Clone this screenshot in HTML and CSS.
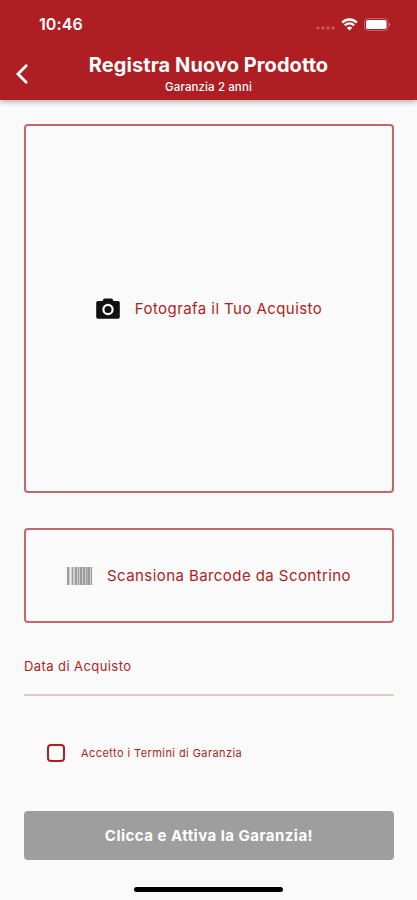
FILE: index.html
```html
<!DOCTYPE html>
<html lang="it">
<head>
    <meta charset="UTF-8">
    <meta name="viewport" content="width=device-width, initial-scale=1.0">
    <title>Registra Nuovo Prodotto</title>
    <link rel="stylesheet" href="styles.css">
</head>
<body>
    <header class="header">
        <div class="status-bar">
            <span class="time">10:46</span>
            <div class="status-icons">
                <svg class="signal" width="20" height="4" viewBox="0 0 20 4">
                    <circle cx="2" cy="2" r="1.7"/>
                    <circle cx="7" cy="2" r="1.7"/>
                    <circle cx="12" cy="2" r="1.7"/>
                    <circle cx="17" cy="2" r="1.7"/>
                </svg>
                <svg class="wifi" width="17" height="13" viewBox="0 0 17 13">
                    <path d="M1.2 4.6a10.3 10.3 0 0 1 14.6 0" stroke-width="2.5"/>
                    <path d="M3.8 7.4a6.6 6.6 0 0 1 9.4 0" stroke-width="2.2"/>
                    <path d="M8.5 12.6L5.8 9.7a3.9 3.9 0 0 1 5.4 0z" fill="#fff" stroke="none"/>
                </svg>
                <svg class="battery" width="27" height="13" viewBox="0 0 27 13">
                    <rect x=".5" y=".5" width="23.5" height="12" rx="3.3" fill="none" stroke="#fff" stroke-opacity=".3"/>
                    <rect x="2" y="2" width="20.5" height="9" rx="1.8" fill="#fff"/>
                    <path d="M25 4.4v4.2c1.6-.6 1.6-3.6 0-4.2z" fill="#fff" fill-opacity=".4"/>
                </svg>
            </div>
        </div>
        <div class="nav-bar">
            <button class="back" aria-label="Indietro">
                <svg width="14" height="22" viewBox="0 0 14 22">
                    <path d="M11.2 2.8L3 11l8.2 8.2"/>
                </svg>
            </button>
            <div class="titles">
                <h1>Registra Nuovo Prodotto</h1>
                <p>Garanzia 2 anni</p>
            </div>
        </div>
    </header>

    <main class="content">
        <button class="box box-photo">
            <svg class="camera" width="24" height="22" viewBox="0 0 24 22">
                <path d="M7.2 1.6Q7.8.5 9 .5h6q1.2 0 1.8 1.1l.8 1.400H22q1.800 0 1.800 1.800v14.200q0 1.800-1.800 1.800H2Q.2 20.800.2 19V4.800Q.2 3 2 3h4.400z" fill="#111"/>
                <circle cx="12" cy="11.5" r="4.600" fill="none" stroke="#fafafa" stroke-width="2.200"/>
            </svg>
            <span>Fotografa il Tuo Acquisto</span>
        </button>

        <button class="box box-barcode">
            <svg class="barcode" width="25" height="18" viewBox="0 0 25 18">
                <rect width="25" height="18" fill="#d0d0d0"/>
                <path d="M3 0h1v18H3z" fill="#f2f2f2"/>
                <path d="M0 0h2v18H0zM5 0h1v18H5zM8 0h2v18H8zM11 0h1v18h-1zM13 0h2v18h-2zM16 0h2v18h-2zM19 0h1.500v18H19zM21 0h2v18h-2zM24 0h1v18h-1z" fill="#9c9c9c"/>
            </svg>
            <span>Scansiona Barcode da Scontrino</span>
        </button>

        <div class="date-field"><span>Data di Acquisto</span></div>

        <label class="terms">
            <input type="checkbox">
            <span>Accetto i Termini di Garanzia</span>
        </label>

        <button class="submit" disabled><span>Clicca e Attiva la Garanzia!</span></button>
    </main>

    <div class="home-indicator"></div>
</body>
</html>
```
FILE: styles.css
```css
* {
    box-sizing: border-box;
}

body {
    margin: 0;
    height: 900px;
    overflow: hidden;
    background-color: #fafafa;
    color: #ae1e22;
    font-family: Inter, "Liberation Sans", sans-serif;
}

button {
    margin: 0;
    padding: 0;
    border: none;
    background: none;
    color: inherit;
    font-family: inherit;
}

svg {
    display: block;
}

.header {
    height: 100px;
    background-color: #ae1e22;
    color: #fff;
    box-shadow: 0 2px 5px rgba(0, 0, 0, 0.3);
}

.status-bar {
    display: flex;
    justify-content: space-between;
    align-items: center;
    height: 48px;
    padding: 0 26px 0 39px;
}

.time {
    font-size: 16px;
    font-weight: 600;
    letter-spacing: 0.1px;
}

.status-icons {
    display: flex;
    align-items: center;
}

.signal {
    margin-top: 8px;
    margin-right: 5px;
    fill: #fff;
    fill-opacity: 0.25;
}

.wifi {
    margin-right: 6px;
    fill: none;
    stroke: #fff;
}

.nav-bar {
    display: grid;
    grid-template-columns: 44px 1fr 44px;
    height: 52px;
}

.back {
    align-self: center;
    padding-left: 15px;
}

.back path {
    fill: none;
    stroke: #fff;
    stroke-width: 2.8;
    stroke-linecap: round;
}

.titles {
    padding-top: 5px;
    text-align: center;
    white-space: nowrap;
}

.titles h1 {
    margin: 0;
    font-size: 20px;
    line-height: 24px;
    font-weight: 700;
    letter-spacing: 0.08px;
}

.titles p {
    margin: 3px 0 0;
    font-size: 11.5px;
    line-height: 14px;
    font-weight: 500;
    letter-spacing: 0.1px;
}

.content {
    padding: 24px 23px 0 24px;
}

.box {
    display: flex;
    align-items: center;
    justify-content: center;
    width: 100%;
    border: 2px solid #c3686b;
    border-radius: 4px;
    font-size: 15px;
    letter-spacing: 0.43px;
    white-space: nowrap;
}

.box-photo {
    height: 369px;
    gap: 15px;
}

.box-barcode {
    height: 95px;
    margin-top: 35px;
    gap: 15px;
}

.date-field {
    height: 73px;
    padding-top: 34px;
    border-bottom: 2px solid #e0c8cb;
    font-size: 13px;
    line-height: 18px;
    letter-spacing: 0.42px;
}

.terms {
    display: flex;
    align-items: center;
    height: 18px;
    margin: 48px 0 0 23px;
    font-size: 11px;
    letter-spacing: 0.42px;
}

.terms input {
    appearance: none;
    width: 18px;
    height: 18px;
    margin: 0 16px 0 0;
    border: 2px solid #ae1e22;
    border-radius: 4px;
}

.submit {
    width: 100%;
    height: 49px;
    margin-top: 49px;
    border-radius: 4px;
    background-color: #9e9e9e;
    color: #fff;
    font-size: 15px;
    font-weight: 700;
    letter-spacing: 0.48px;
}

.home-indicator {
    width: 149px;
    height: 5px;
    margin: 27px auto 0;
    border-radius: 3px;
    background-color: #000;
}
```
